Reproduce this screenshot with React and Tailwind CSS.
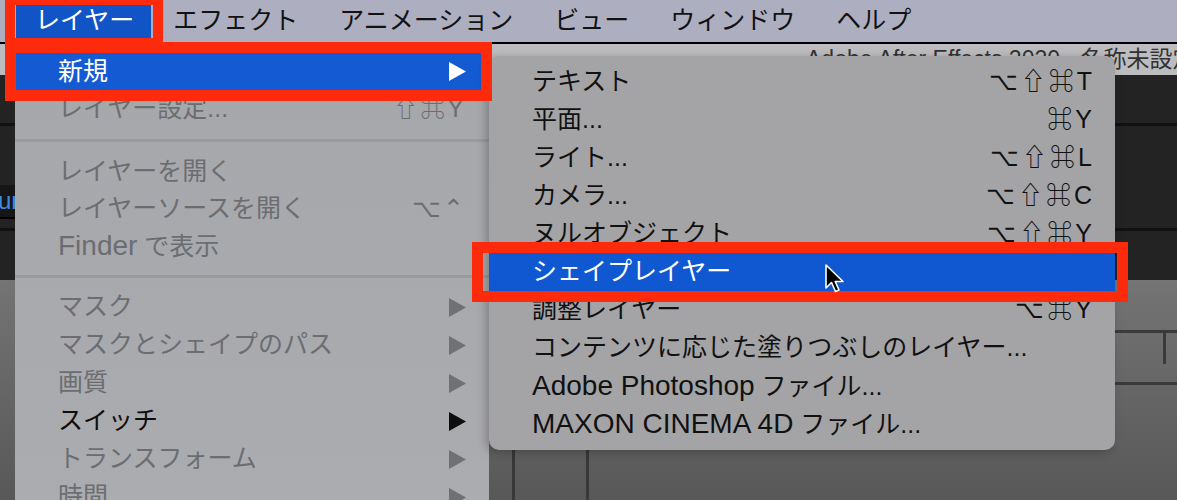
import React from "react";

const FONT = "font-['Liberation_Sans','Noto_Sans_CJK_JP',sans-serif]";

const MENUBAR = ["エフェクト", "アニメーション", "ビュー", "ウィンドウ", "ヘルプ"];

// Latin runs are set a bit larger so they match the width of the macOS system font
function Latin({ children }) {
  return <span className="text-[28px]">{children}</span>;
}

const LAYER_ITEMS = [
  { label: "新規", arrow: true, active: true, h: "h-[37px]" },
  { label: "レイヤー設定...", shortcut: "⇧⌘Y", h: "h-[37px]" },
  { sep: true, h: "h-[26px]" },
  { label: "レイヤーを開く", h: "h-[37px]" },
  { label: "レイヤーソースを開く", shortcut: "⌥⌃", h: "h-[37px]" },
  {
    label: (
      <>
        <Latin>Finder</Latin> で表示
      </>
    ),
    h: "h-[37px]",
  },
  { sep: true, h: "h-[24px]" },
  { label: "マスク", arrow: true, h: "h-[38px]" },
  { label: "マスクとシェイプのパス", arrow: true, h: "h-[38px]" },
  { label: "画質", arrow: true, h: "h-[38px]" },
  { label: "スイッチ", arrow: true, enabled: true, h: "h-[38px]" },
  { label: "トランスフォーム", arrow: true, h: "h-[38px]" },
  { label: "時間", arrow: true, h: "h-[38px]" },
];

const NEW_ITEMS = [
  { label: "テキスト", shortcut: "⌥⇧⌘T" },
  { label: "平面...", shortcut: "⌘Y" },
  { label: "ライト...", shortcut: "⌥⇧⌘L" },
  { label: "カメラ...", shortcut: "⌥⇧⌘C" },
  { label: "ヌルオブジェクト", shortcut: "⌥⇧⌘Y" },
  { label: "シェイプレイヤー", active: true },
  { label: "調整レイヤー", shortcut: "⌥⌘Y" },
  { label: "コンテンツに応じた塗りつぶしのレイヤー..." },
  {
    label: (
      <>
        <Latin>Adobe Photoshop</Latin> ファイル...
      </>
    ),
  },
  {
    label: (
      <>
        <Latin>MAXON CINEMA 4D</Latin> ファイル...
      </>
    ),
  },
];

function Arrow({ color }) {
  return (
    <svg width="17" height="19" viewBox="0 0 17 19">
      <polygon points="0,0 17,9.5 0,19" fill={color} />
    </svg>
  );
}

function MenuBar() {
  return (
    <div className="flex h-[44px] shrink-0 items-center border-b-2 border-black bg-[#adafc1] text-[25px] text-[#121212]">
      <span className="ml-[16px] flex h-[33px] items-center bg-[#1154c6] pl-[19px] pr-[17px] text-white">
        レイヤー
      </span>
      <div className="ml-[22px] flex gap-[41px]">
        {MENUBAR.map((m) => (
          <span key={m}>{m}</span>
        ))}
      </div>
    </div>
  );
}

function TitleBar() {
  return (
    <div className="flex h-[31px] shrink-0">
      <div className="w-[15px] bg-[#262626]" />
      <div className="flex flex-1 items-center whitespace-nowrap bg-[#bdbdbf] pl-[806px] text-[23px] text-[#333]">
        Adobe After Effects 2020 - 名称未設定プロジェクト.aep
      </div>
    </div>
  );
}

function Workspace() {
  return (
    <div className="flex flex-1 flex-col">
      <div className="flex h-[205px] shrink-0 flex-col bg-[#232323]">
        <div className="h-[51px] border-b-[3px] border-[#111]" />
        <div className="h-[105px] border-b-[3px] border-[#111]">
          <div className="mt-[59px] flex h-[34px] w-[15px] items-center overflow-hidden border-b-2 border-black bg-[#161616]">
            <span className="-ml-[2px] text-[24px] text-[#3d8be0]">ur</span>
          </div>
        </div>
        <div className="flex-1" />
      </div>
      <div className="flex flex-1 bg-gradient-to-b from-[#747474] to-[#585858]">
        <div className="w-[512px]" />
        <div className="w-[74px] border-l-[3px] border-[#383838]" />
        <div className="flex flex-1 flex-col border-l-[3px] border-[#383838]">
          <div className="h-[53px] border-b-[3px] border-[#3a3a3a]" />
          <div className="flex h-[52px] border-b-[3px] border-[#3a3a3a]">
            <div className="flex-1" />
            <div className="mb-[18px] w-[14px] border-l-[3px] border-[#3a3a3a]" />
          </div>
        </div>
      </div>
    </div>
  );
}

function LayerMenu() {
  return (
    <div className="absolute left-[15px] top-[46px] h-[480px] w-[474px] bg-gradient-to-b from-[#a6a7ab] to-[#abacb0] pt-[7px] text-[25px]">
      {LAYER_ITEMS.map((it, i) =>
        it.sep ? (
          <div key={i} className={`flex items-center ${it.h}`}>
            <div className="h-[3px] w-full bg-[#9a9b9f]" />
          </div>
        ) : (
          <div
            key={i}
            className={`flex items-center justify-between pl-[43px] pr-[23px] ${it.h} ${
              it.active ? "bg-[#145ad2] text-white" : it.enabled ? "text-[#0e0e0e]" : "text-[#6c6d71]"
            }`}
          >
            <span>{it.label}</span>
            {it.shortcut && <span className="tracking-[2px]">{it.shortcut}</span>}
            {it.arrow && <Arrow color={it.active ? "#ffffff" : it.enabled ? "#0e0e0e" : "#707175"} />}
          </div>
        )
      )}
    </div>
  );
}

function NewSubmenu() {
  return (
    <div className="absolute left-[489px] top-[56px] h-[394px] w-[626px] rounded-[10px] bg-[#a4a4a7] pt-[7px] text-[25px] text-[#111] shadow-[-3px_2px_10px_rgba(0,0,0,0.25)]">
      {NEW_ITEMS.map((it, i) => (
        <div
          key={i}
          className={`flex h-[38px] items-center justify-between pl-[43px] pr-[20px] ${
            it.active ? "bg-[#0f58d1] text-white" : ""
          }`}
        >
          <span>{it.label}</span>
          {it.shortcut && <span className="tracking-[3px]">{it.shortcut}</span>}
        </div>
      ))}
    </div>
  );
}

function Cursor() {
  return (
    <svg className="absolute left-[824px] top-[263px]" width="24" height="32" viewBox="0 0 24 32">
      <path
        d="M2 2 L2 25 L7.5 19.5 L11.5 28.5 L15 27 L11.2 18.5 L19 18.5 Z"
        fill="#000"
        stroke="#fff"
        strokeWidth="1.6"
        strokeLinejoin="round"
      />
    </svg>
  );
}

export default function App() {
  return (
    <div className={`relative flex h-[500px] w-[1177px] flex-col overflow-hidden bg-[#1e1e1e] ${FONT}`}>
      <MenuBar />
      <TitleBar />
      <Workspace />

      <LayerMenu />
      <NewSubmenu />

      {/* annotation boxes */}
      <div className="absolute left-[5px] top-[-5px] h-[49px] w-[158px] border-x-[10px] border-b-[6px] border-t-[10px] border-[#fd2a0b]" />
      <div className="absolute left-[5px] top-[42px] h-[59px] w-[487px] border-[11px] border-[#fd2a0b]" />
      <div className="absolute left-[472px] top-[242px] h-[60px] w-[656px] border-[11px] border-[#fd2a0b]" />

      <Cursor />
    </div>
  );
}
